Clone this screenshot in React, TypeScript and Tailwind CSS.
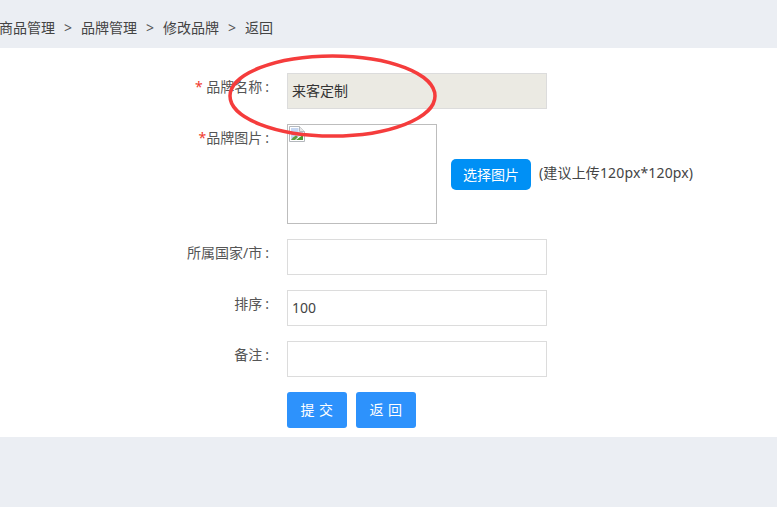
const font = "font-['Noto_Sans','Noto_Sans_CJK_SC',sans-serif]";

function BrokenImage() {
  return (
    <svg width="16" height="16" viewBox="0 0 16 16" className="block">
      <path d="M0.5 0.5H10.5L15.5 5.5V15.5H0.5Z" fill="#fff" stroke="#b4b8bd" />
      <path d="M10.5 0.5V5.5H15.5" fill="#e8e8e8" stroke="#b4b8bd" />
      <path d="M2 2H9.5V6H14V9L9 11L6 14H2Z" fill="#c5d6f2" />
      <path d="M2 14L4 11.5L7 9.5L9 11L6 14Z" fill="#5f9e3a" />
      <path d="M7 14L13 9.5L14 10V14Z" fill="#4c9a2f" />
    </svg>
  );
}

function Row({ label, star, children }: { label: string; star?: string; children: React.ReactNode }) {
  return (
    <div className="flex">
      <div className="w-[287px] shrink-0 pr-[18px] pt-[5px] text-right text-sm leading-[18px] text-[#555]">
        {star && <span className="text-[#f03a2e]">{star}</span>}
        {label}
        <span className="ml-[3px]">:</span>
      </div>
      {children}
    </div>
  );
}

function Field({ value }: { value?: string }) {
  return (
    <div className="flex h-9 w-[260px] items-center border border-[#dcdcdc] bg-white pl-1 text-sm text-[#444]">
      {value}
    </div>
  );
}

export default function App() {
  const crumbs = ["商品管理", "品牌管理", "修改品牌", "返回"];
  return (
    <div className={`${font} relative h-[507px] w-[777px] overflow-hidden bg-[#ebeef3]`}>
      <div className="-ml-[1px] flex h-12 items-center pt-[8px] text-sm text-[#444]">
        {crumbs.map((c, i) => (
          <div key={c} className="flex items-center">
            {i > 0 && <span className="w-[26px] text-center text-[#555]">&gt;</span>}
            <span>{c}</span>
          </div>
        ))}
      </div>

      <div className="flex h-[389px] flex-col gap-[15px] bg-white pt-[25px]">
        <Row label=" 品牌名称" star="*">
          <div className="flex h-9 w-[260px] items-center border border-[#dcdcdc] bg-[#ebeae3] pl-1 text-sm text-[#333]">
            来客定制
          </div>
        </Row>

        <Row label="品牌图片" star="*">
          <div className="h-[100px] w-[150px] border border-[#bdbdbd] bg-white pt-[1px] pl-[1px]">
            <BrokenImage />
          </div>
          <div className="ml-[14px] mt-[35px] flex h-[31px] w-20 items-center justify-center rounded-[5px] bg-[#0090f5] text-sm text-white">
            选择图片
          </div>
          <div className="ml-[8px] mt-[40px] text-sm leading-[18px] tracking-[0.15px] text-[#444]">(建议上传120px*120px)</div>
        </Row>

        <Row label="所属国家/市">
          <Field />
        </Row>
        <Row label="排序">
          <Field value="100" />
        </Row>
        <Row label="备注">
          <Field />
        </Row>

        <div className="flex gap-[9px] pl-[287px]">
          <div className="flex h-9 w-[60px] items-center justify-center rounded-[3px] bg-[#2d92fc] text-sm tracking-[0.5px] text-white">提 交</div>
          <div className="flex h-9 w-[60px] items-center justify-center rounded-[3px] bg-[#2d92fc] text-sm tracking-[0.5px] text-white">返 回</div>
        </div>
      </div>

      <svg className="absolute left-[225px] top-[50px]" width="216" height="92" viewBox="0 0 216 92" fill="none">
        <ellipse cx="107.5" cy="46" rx="102.5" ry="40" stroke="#f53c3c" strokeWidth="3.5" />
      </svg>
    </div>
  );
}
